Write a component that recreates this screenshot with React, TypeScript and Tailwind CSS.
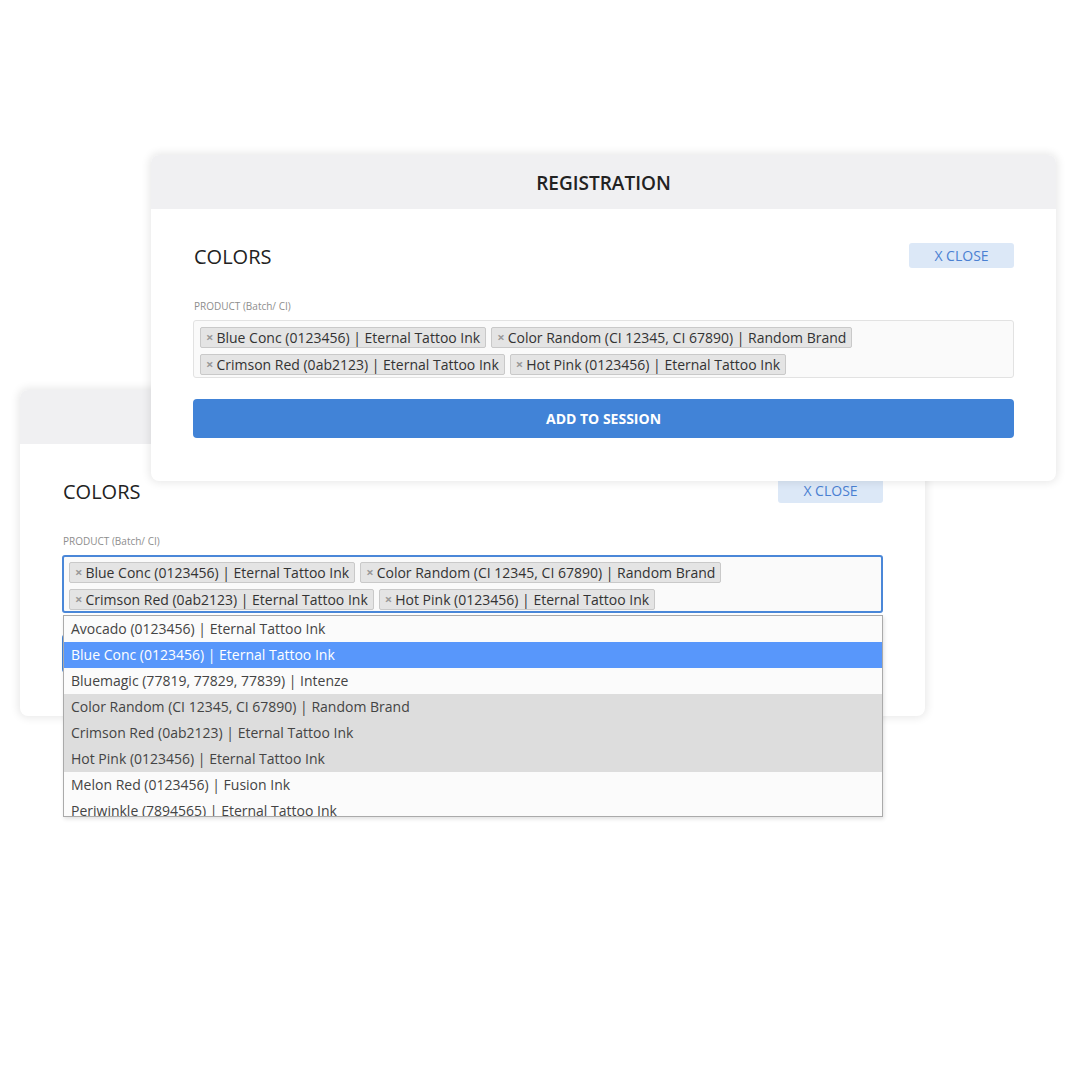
import React from "react";

const tagsRow1 = [
  "Blue Conc (0123456) | Eternal Tattoo Ink",
  "Color Random (CI 12345, CI 67890) | Random Brand",
];
const tagsRow2 = [
  "Crimson Red (0ab2123) | Eternal Tattoo Ink",
  "Hot Pink (0123456) | Eternal Tattoo Ink",
];

const options: { label: string; state: "normal" | "hl" | "sel" }[] = [
  { label: "Avocado (0123456) | Eternal Tattoo Ink", state: "normal" },
  { label: "Blue Conc (0123456) | Eternal Tattoo Ink", state: "hl" },
  { label: "Bluemagic (77819, 77829, 77839) | Intenze", state: "normal" },
  { label: "Color Random (CI 12345, CI 67890) | Random Brand", state: "sel" },
  { label: "Crimson Red (0ab2123) | Eternal Tattoo Ink", state: "sel" },
  { label: "Hot Pink (0123456) | Eternal Tattoo Ink", state: "sel" },
  { label: "Melon Red (0123456) | Fusion Ink", state: "normal" },
  { label: "Periwinkle (7894565) | Eternal Tattoo Ink", state: "normal" },
];

function Tag({ text }: { text: string }) {
  return (
    <span className="flex h-[21px] items-center rounded-[2px] border border-[#c9c9c9] bg-[#e4e4e4] pl-[5px] pr-[5px] text-[14px] leading-[19px] text-[#333]">
      <span className="mr-[3px] text-[13px] font-bold leading-none text-[#999]">×</span>
      {text}
    </span>
  );
}

function Card({ focused }: { focused?: boolean }) {
  return (
    <div className="w-[905px] overflow-visible rounded-[8px] bg-white shadow-[0_0_8px_2px_rgba(0,0,0,0.09)]">
      <div className="flex h-[54px] items-center justify-center rounded-t-[8px] bg-[#f0f0f2] pt-[2px] text-[19px] font-semibold text-[#222]">
        REGISTRATION
      </div>
      <div className="px-[42px] pb-[43px] pt-[34px]">
        <div className="flex h-[25px] items-center justify-between">
          <span className="pl-[1px] pt-[3px] text-[20px] leading-none text-[#222]">COLORS</span>
          <button className="h-[25px] w-[105px] rounded-[3px] bg-[#dce8f7] text-[14px] leading-none text-[#4a80d2]">
            X CLOSE
          </button>
        </div>
        <div className="mt-[31px] pl-[1px] text-[10px] leading-[14px] text-[#8e8e8e]">PRODUCT (Batch/ CI)</div>
        <div className="relative mt-[7px]">
          <div
            className={
              focused
                ? "flex flex-col gap-y-[6px] rounded-[3px] border-2 border-[#4a87d8] bg-[#fafafa] px-[5px] pb-[1px] pt-[5px]"
                : "flex flex-col gap-y-[6px] rounded-[3px] border border-[#e2e2e2] bg-[#fafafa] px-[6px] pb-[2px] pt-[6px]"
            }
          >
            <div className="flex gap-x-[5px]">
              {tagsRow1.map((t) => (
                <Tag key={t} text={t} />
              ))}
            </div>
            <div className="flex gap-x-[5px]">
              {tagsRow2.map((t) => (
                <Tag key={t} text={t} />
              ))}
            </div>
          </div>
          {focused && (
            <div className="absolute left-[1px] right-0 top-[60px] z-20 max-h-[202px] overflow-hidden border border-[#aaa] bg-[#fbfbfb] shadow-[1px_2px_4px_rgba(0,0,0,0.12)]">
              {options.map((o) => (
                <div
                  key={o.label}
                  className={
                    "h-[26px] pl-[7px] text-[14px] leading-[26px] " +
                    (o.state === "hl"
                      ? "bg-[#5897fb] text-white"
                      : o.state === "sel"
                      ? "bg-[#dddddd] text-[#444]"
                      : "text-[#444]")
                  }
                >
                  {o.label}
                </div>
              ))}
            </div>
          )}
        </div>
        <button className="mt-[21px] flex h-[39px] w-full items-center justify-center rounded-[4px] bg-[#4183d7] text-[14px] font-bold text-white">
          ADD TO SESSION
        </button>
      </div>
    </div>
  );
}

export default function App() {
  return (
    <div
      className="relative h-[1080px] w-[1080px] overflow-hidden bg-white"
      style={{ fontFamily: '"Open Sans", "Noto Sans", sans-serif' }}
    >
      <div className="absolute left-[20px] top-[390px] z-10">
        <Card focused />
      </div>
      <div className="absolute left-[151px] top-[155px] z-30">
        <Card />
      </div>
    </div>
  );
}
